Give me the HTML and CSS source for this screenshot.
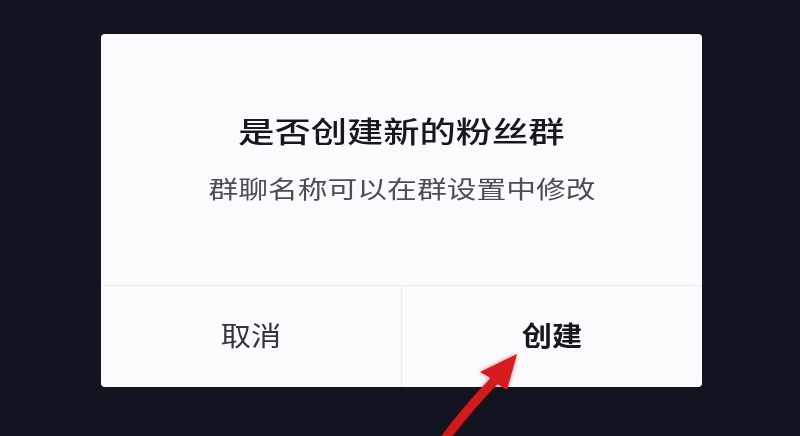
FILE: index.html
```html
<!DOCTYPE html>
<html lang="zh-CN">
<head>
  <meta charset="UTF-8"/>
  <meta name="viewport" content="width=device-width, initial-scale=1.0"/>
  <title>创建粉丝群</title>
  <link rel="stylesheet" href="styles.css">
</head>
<body>
  <div class="screen">
    <div class="dialog">
      <div class="dialog-body">
        <h2 class="title">是否创建新的粉丝群</h2>
        <p class="desc">群聊名称可以在群设置中修改</p>
      </div>
      <div class="actions">
        <button type="button" class="btn cancel"><span>取消</span></button>
        <button type="button" class="btn confirm"><span>创建</span></button>
      </div>
    </div>

    <!-- red pointer arrow -->
    <svg class="arrow" width="800" height="436" viewBox="0 0 800 436">
      <path d="M444 440 Q466 410 496 379" fill="none" stroke="#cf1a1e" stroke-width="9" stroke-linecap="butt"/>
      <polygon points="517,354 480,372 489,377 494,382 507,390" fill="#d61c20"/>
    </svg>
  </div>
</body>
</html>
```

FILE: styles.css
```css
html, body { margin:0; padding:0; }
body { background:#12141f; font-family:"Noto Sans CJK SC", "Noto Sans", sans-serif; width:800px; height:436px; overflow:hidden; }

.screen { position:relative; width:800px; height:436px; padding:34px 0 0 101px; box-sizing:border-box; }

.dialog { width:601px; height:353px; background:#fbfbfd; border-radius:4px; display:flex; flex-direction:column; }
.dialog-body { height:251px; display:flex; flex-direction:column; align-items:center; }
.title { margin:76px 0 0; font-size:29px; font-weight:500; color:#17181f; line-height:40px; transform:scaleX(1.25); }
.desc { margin:22px 0 0; font-size:24px; color:#4d4e55; line-height:32px; transform:scaleX(1.24); }

.actions { flex:1; display:flex; border-top:1px solid #ececef; }
.btn { flex:1; background:none; border:none; font-family:inherit; font-size:27px; padding:0 0 4px; cursor:pointer; }
.btn span { display:inline-block; transform:scaleX(1.12); }
.btn + .btn { border-left:1px solid #ececef; }
.cancel { color:#34353c; }
.confirm { color:#17181f; font-weight:bold; }

.arrow { position:absolute; left:0; top:0; pointer-events:none; filter:drop-shadow(0 0 2px rgba(120,0,0,0.5)); }
```
